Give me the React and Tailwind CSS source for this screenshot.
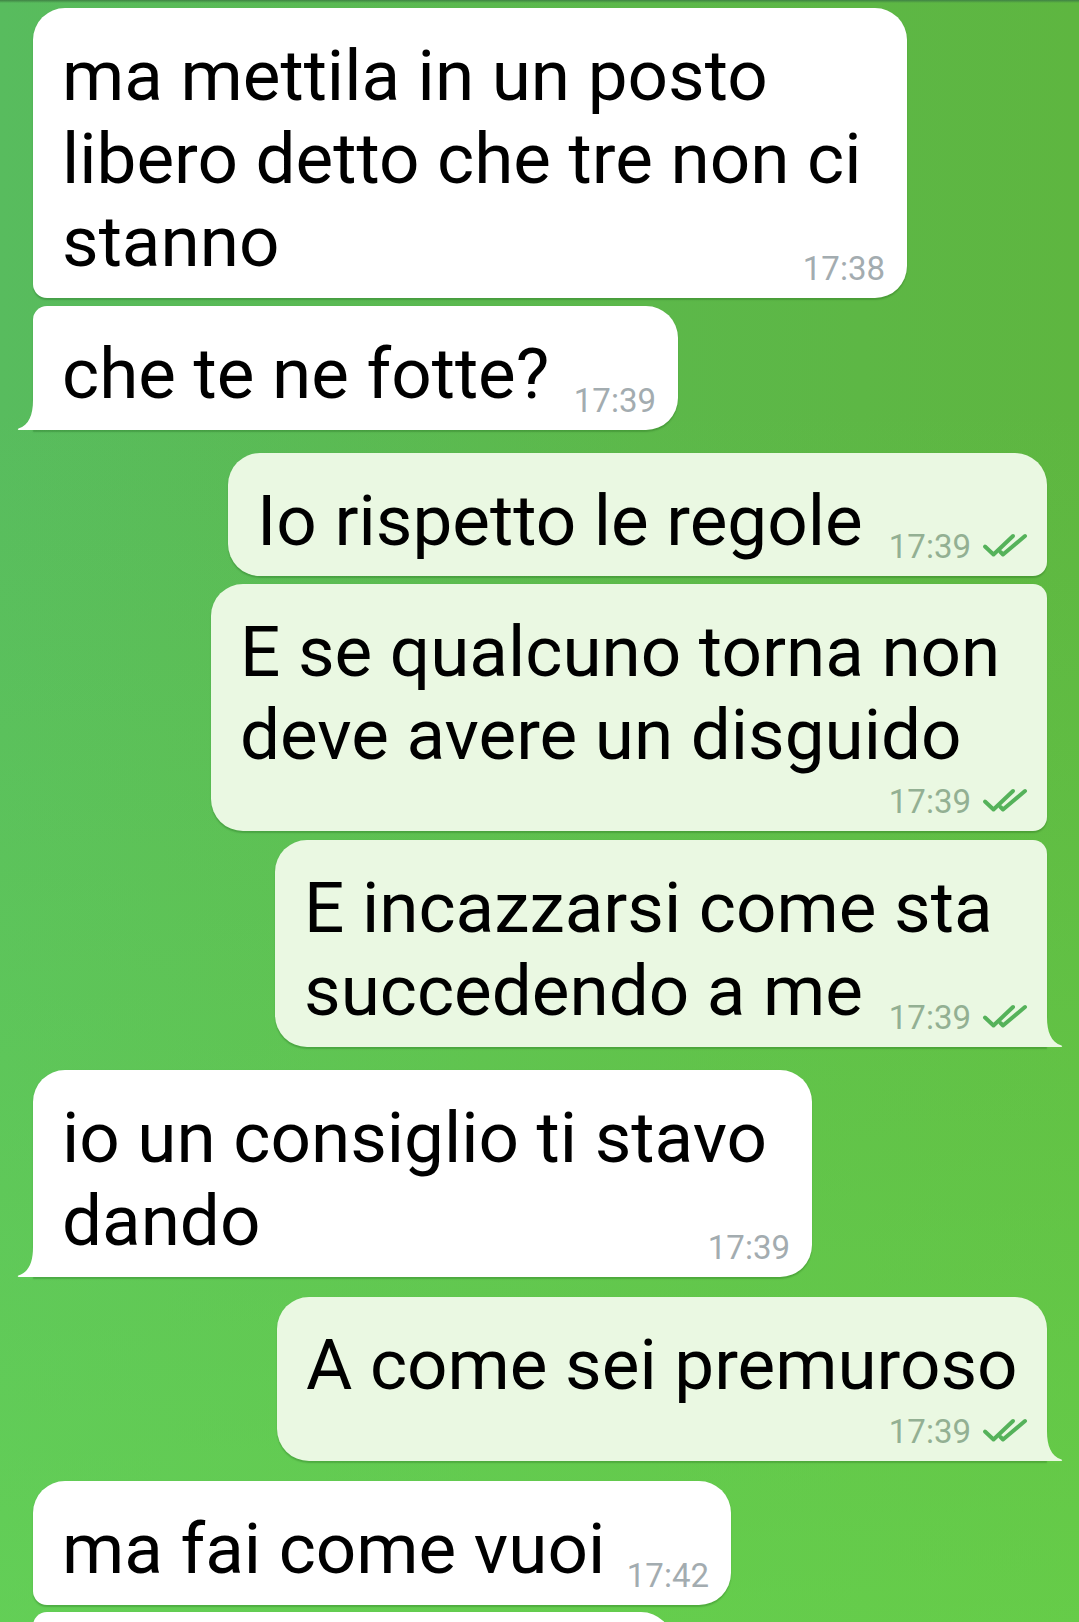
import React from "react";

const bubbles = [
  {
    out: false,
    row: "mt-[8px]",
    box: "w-[874px] h-[290px] rounded-tl-[32px] rounded-tr-[32px] rounded-br-[32px] rounded-bl-[14px]",
    lines: ["ma mettila in un posto", "libero detto che tre non ci", "stanno"],
    time: "17:38",
  },
  {
    out: false,
    row: "mt-[8px]",
    box: "w-[645px] h-[124px] rounded-tl-[14px] rounded-tr-[32px] rounded-br-[32px] rounded-bl-none",
    lines: ["che te ne fotte?"],
    time: "17:39",
    tail: true,
  },
  {
    out: true,
    row: "mt-[23px]",
    box: "w-[819px] h-[123px] rounded-tl-[32px] rounded-tr-[32px] rounded-bl-[32px] rounded-br-[14px]",
    lines: ["Io rispetto le regole"],
    time: "17:39",
  },
  {
    out: true,
    row: "mt-[8px]",
    box: "w-[836px] h-[247px] rounded-tl-[32px] rounded-tr-[14px] rounded-bl-[32px] rounded-br-[14px]",
    lines: ["E se qualcuno torna non", "deve avere un disguido"],
    time: "17:39",
  },
  {
    out: true,
    row: "mt-[9px]",
    box: "w-[772px] h-[207px] rounded-tl-[32px] rounded-tr-[14px] rounded-bl-[32px] rounded-br-none",
    lines: ["E incazzarsi come sta", "succedendo a me"],
    time: "17:39",
    tail: true,
  },
  {
    out: false,
    row: "mt-[23px]",
    box: "w-[779px] h-[207px] rounded-tl-[32px] rounded-tr-[32px] rounded-br-[32px] rounded-bl-none",
    lines: ["io un consiglio ti stavo", "dando"],
    time: "17:39",
    tail: true,
  },
  {
    out: true,
    row: "mt-[20px]",
    box: "w-[770px] h-[164px] rounded-tl-[32px] rounded-tr-[32px] rounded-bl-[32px] rounded-br-none",
    lines: ["A come sei premuroso"],
    time: "17:39",
    tail: true,
  },
  {
    out: false,
    row: "mt-[20px]",
    box: "w-[698px] h-[124px] rounded-tl-[32px] rounded-tr-[32px] rounded-br-[32px] rounded-bl-[14px]",
    lines: ["ma fai come vuoi"],
    time: "17:42",
  },
  {
    out: false,
    row: "mt-[7px]",
    box: "w-[640px] h-[124px] rounded-tl-[14px] rounded-tr-[32px] rounded-br-[32px] rounded-bl-[32px]",
    lines: [],
    time: null,
  },
];

function Checks() {
  return (
    <svg width="46" height="25" viewBox="0 0 46 25" className="block">
      <path
        d="M3 13.5 L11.5 21.5 L31 3"
        fill="none"
        stroke="#55b25a"
        strokeWidth="4"
        strokeLinecap="round"
        strokeLinejoin="round"
      />
      <path
        d="M18.5 19 L21 21.5 L43 3"
        fill="none"
        stroke="#55b25a"
        strokeWidth="4"
        strokeLinecap="round"
        strokeLinejoin="round"
      />
    </svg>
  );
}

function TailLeft() {
  return (
    <svg
      width="20"
      height="30"
      viewBox="0 0 20 30"
      className="absolute left-[-16px] bottom-0 block"
    >
      <path
        d="M20 0 L16 0 C16 15 12 25 1.5 28.6 Q0 29.3 1.5 30 L20 30 Z"
        fill="#ffffff"
      />
    </svg>
  );
}

function TailRight() {
  return (
    <svg
      width="20"
      height="30"
      viewBox="0 0 20 30"
      className="absolute right-[-16px] bottom-0 block"
    >
      <path
        d="M0 0 L4 0 C4 15 8 25 18.5 28.6 Q20 29.3 18.5 30 L0 30 Z"
        fill="#eaf8e2"
      />
    </svg>
  );
}

function Bubble({ b }) {
  const bg = b.out ? "bg-[#eaf8e2]" : "bg-white";
  return (
    <div className={`flex shrink-0 ${b.out ? "justify-end pr-[32px]" : "justify-start pl-[33px]"} ${b.row}`}>
      <div
        className={`relative shrink-0 ${bg} ${b.box} pl-[29px] pt-[26px] shadow-[0_1.5px_1.5px_rgba(0,60,0,0.22)]`}
      >
        <div className="text-[71px] leading-[83px] text-black whitespace-nowrap">
          {b.lines.map((l, i) => (
            <div key={i}>{l}</div>
          ))}
        </div>
        {b.time && (
          <div
            className={`absolute bottom-[13px] flex items-end gap-[11px] ${
              b.out ? "right-[19px]" : "right-[22px]"
            }`}
          >
            <span
              className={`text-[33px] leading-[33px] ${
                b.out ? "text-[#93b093]" : "text-[#a3acb0]"
              }`}
            >
              {b.time}
            </span>
            {b.out && (
              <span className="mb-[5px]">
                <Checks />
              </span>
            )}
          </div>
        )}
        {b.tail && (b.out ? <TailRight /> : <TailLeft />)}
      </div>
    </div>
  );
}

export default function App() {
  return (
    <div
      className="relative w-[1079px] h-[1622px] overflow-hidden flex flex-col bg-[linear-gradient(180deg,rgba(108,222,80,0)_25%,rgba(108,222,80,0.55)_100%),linear-gradient(90deg,#58bc5e_0%,#5cb84a_60%,#5eb640_100%)]"
      style={{ fontFamily: "Roboto, 'Noto Sans', 'Liberation Sans', sans-serif" }}
    >
      <div className="absolute top-0 left-0 right-0 h-[3px] bg-[linear-gradient(180deg,#3f8244,rgba(63,130,68,0))]" />
      {bubbles.map((b, i) => (
        <Bubble key={i} b={b} />
      ))}
    </div>
  );
}
